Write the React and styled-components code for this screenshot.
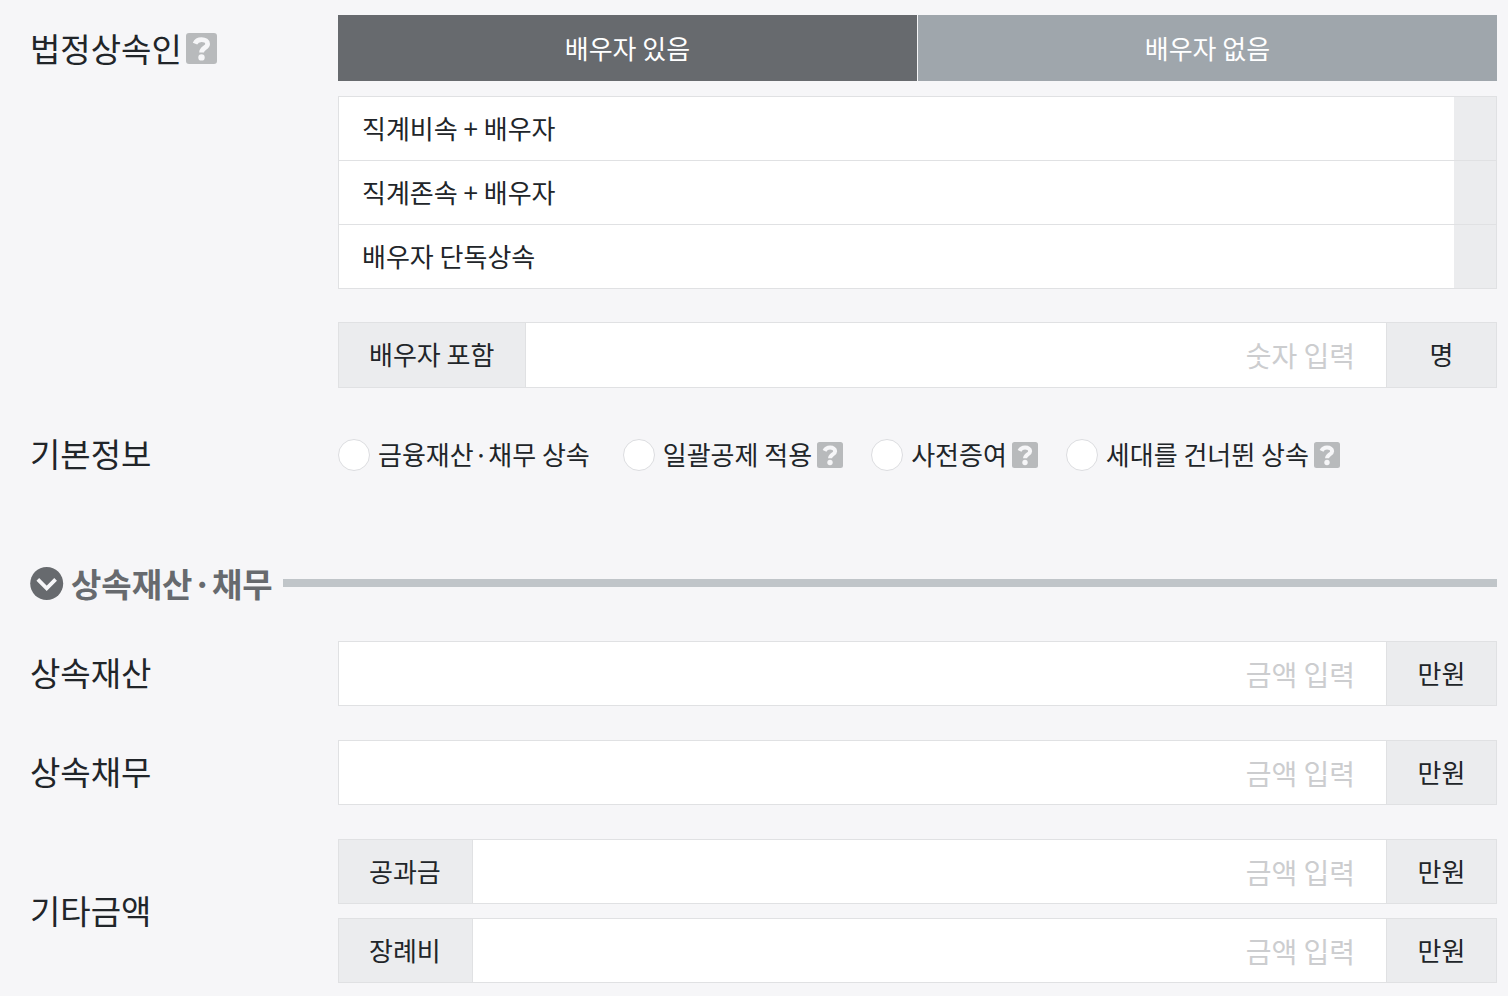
import { useState } from "react";
import styled, { createGlobalStyle } from "styled-components"

const heirs = ['직계비속 + 배우자', '직계존속 + 배우자', '배우자 단독상속'];

const infos = [
    { id: 'finance', text: '금융재산·채무 상속' },
    { id: 'lump', text: '일괄공제 적용', help: true },
    { id: 'gift', text: '사전증여', help: true },
    { id: 'skip', text: '세대를 건너뛴 상속', help: true },
];

function HelpIcon({ size }){
    return(
        <svg width={size} height={size} viewBox="0 0 31 31" aria-hidden="true">
            <rect width="31" height="31" rx="3" fill="#b8babc" />
            <path d="M9 10.6C10.2 7.8 12.6 6.6 15.6 6.6c3.5 0 6 1.7 6 4.3 0 4-6 3.9-6 8.6" fill="none" stroke="#f6f6f8" strokeWidth="4.8" strokeLinejoin="round" />
            <circle cx="15.5" cy="24.4" r="3.2" fill="#f6f6f8" />
        </svg>
    );
}

function AmountField({ id, label, prefix, unit = '만원', placeholder = '금액 입력', tall }){
    return(
        <Group $tall={tall}>
            {prefix && <Prefix htmlFor={id}>{prefix}</Prefix>}
            <AmountInput id={id} aria-label={label} placeholder={placeholder} inputMode="numeric" />
            <Unit>{unit}</Unit>
        </Group>
    );
}

export default function App(){
    const [spouse, setSpouse] = useState(true);
    const [open, setOpen] = useState(true);

    return(
        <>
        <GlobalStyle />
        <Page>
            <Row>
                <Title $top>
                    법정상속인
                    <HelpButton type="button" aria-label="법정상속인 도움말"><HelpIcon size={31} /></HelpButton>
                </Title>
                <Fields>
                    <Tabs>
                        <Tab type="button" $active={spouse} onClick={() => setSpouse(true)}>배우자 있음</Tab>
                        <Tab type="button" $active={!spouse} onClick={() => setSpouse(false)}>배우자 없음</Tab>
                    </Tabs>
                    <HeirList>
                        {heirs.map((heir) => (
                            <li key={heir}><HeirButton type="button">{heir}</HeirButton></li>
                        ))}
                    </HeirList>
                    <AmountField id="heirs" prefix="배우자 포함" unit="명" placeholder="숫자 입력" tall />
                </Fields>
            </Row>
            <InfoRow>
                <Title>기본정보</Title>
                <Checks>
                    {infos.map((info) => (
                        <CheckItem key={info.id}>
                            <Check type="checkbox" id={info.id} />
                            <CheckLabel htmlFor={info.id}>{info.text}</CheckLabel>
                            {info.help && (
                                <HelpButton type="button" aria-label={info.text + ' 도움말'}><HelpIcon size={26} /></HelpButton>
                            )}
                        </CheckItem>
                    ))}
                </Checks>
            </InfoRow>
            <Section>
                <SectionTitle>
                    <SectionButton type="button" aria-expanded={open} onClick={() => setOpen(!open)}>
                        <svg width="34" height="34" viewBox="0 0 34 34" aria-hidden="true">
                            <circle cx="16.7" cy="17.5" r="16.5" fill="#676a6e" />
                            <path d="M7.8 13.4l8.9 8.9 8.9-8.9" fill="none" stroke="#f6f6f8" strokeWidth="3.8" />
                        </svg>
                        상속재산·채무
                    </SectionButton>
                </SectionTitle>
                <Line />
            </Section>
            {open && (
                <Amounts>
                    <Row $center>
                        <Title as="label" htmlFor="assets">상속재산</Title>
                        <Fields><AmountField id="assets" /></Fields>
                    </Row>
                    <Row $center>
                        <Title as="label" htmlFor="debts">상속채무</Title>
                        <Fields><AmountField id="debts" /></Fields>
                    </Row>
                    <Row $center>
                        <Title>기타금액</Title>
                        <Fields $gap={14}>
                            <AmountField id="dues" prefix="공과금" />
                            <AmountField id="funeral" prefix="장례비" />
                        </Fields>
                    </Row>
                </Amounts>
            )}
        </Page>
        </>
    );
}

const GlobalStyle = createGlobalStyle`
    * {
        box-sizing: border-box;
    }
    body {
        margin: 0;
        background-color: #f6f6f8;
        color: #212529;
        font-family: 'Noto Sans CJK KR', sans-serif;
        font-size: 26px;
        line-height: 36px;
    }
    button, input {
        font: inherit;
        color: inherit;
    }
    button {
        cursor: pointer;
    }
`
const Page = styled.main`
    padding: 15px 11px 13px 30px;
`
const Row = styled.div`
    display: flex;
    align-items: ${({ $center }) => $center ? 'center' : 'flex-start'};
`
const InfoRow = styled(Row)`
    align-items: center;
    margin-top: 43px;
`
const Title = styled.div`
    display: flex;
    align-items: center;
    flex: none;
    gap: 4px;
    width: 308px;
    font-size: 33px;
    line-height: 44px;
    padding-top: ${({ $top }) => $top ? '11px' : '0'};
    padding-bottom: 3px;
`
const HelpButton = styled.button`
    display: flex;
    flex: none;
    padding: 0;
    border: none;
    background: none;
`
const Fields = styled.div`
    display: flex;
    flex-direction: column;
    flex: 1;
    min-width: 0;
    gap: ${({ $gap }) => $gap || 0}px;
`
const Tabs = styled.div`
    display: flex;
    gap: 1px;
    margin-bottom: 15px;
`
const Tab = styled.button`
    flex: 1;
    height: 66px;
    padding: 0;
    border: none;
    color: #FFFFFF;
    background-color: ${({ $active }) => $active ? '#676a6e' : '#9fa6ac'};
`
const HeirList = styled.ul`
    margin: 0 0 33px;
    padding: 0;
    list-style: none;
    border: 1px solid #e0e1e3;

    li + li {
        border-top: 1px solid #e0e1e3;
    }
`
const HeirButton = styled.button`
    display: block;
    width: 100%;
    height: 63px;
    padding: 0 23px 2px;
    border: none;
    border-right: 42px solid #ebecee;
    background-color: #FFFFFF;
    text-align: left;
`
const Group = styled.div`
    display: flex;
    height: ${({ $tall }) => $tall ? 66 : 65}px;
    border: 1px solid #e0e1e3;
    background-color: #FFFFFF;
`
const Prefix = styled.label`
    display: flex;
    align-items: center;
    flex: none;
    padding: 0 31px 2px 30px;
    border-right: 1px solid #e0e1e3;
    background-color: #ebecee;
`
const AmountInput = styled.input`
    flex: 1;
    min-width: 0;
    padding: 0 31px;
    border: none;
    background: none;
    text-align: right;
    font-size: 28px;

    &::placeholder {
        color: #cccdcf;
        opacity: 1;
    }
`
const Unit = styled.span`
    display: flex;
    align-items: center;
    justify-content: center;
    flex: none;
    width: 110px;
    padding-bottom: 2px;
    border-left: 1px solid #e0e1e3;
    background-color: #ebecee;
`
const Checks = styled.div`
    display: flex;
    flex-wrap: wrap;
    gap: 28px;
`
const CheckItem = styled.div`
    display: flex;
    align-items: center;
`
const Check = styled.input`
    appearance: none;
    flex: none;
    width: 32px;
    height: 32px;
    margin: 0 8px 0 0;
    border: 1px solid #dcdde0;
    border-radius: 50%;
    background-color: #FFFFFF;

    &:checked {
        border: 10px solid #676a6e;
    }
`
const CheckLabel = styled.label`
    margin-right: 5px;
    padding-bottom: 2px;
`
const Section = styled.div`
    display: flex;
    align-items: center;
    gap: 10px;
    margin: 82px 0 35px;
`
const SectionTitle = styled.h2`
    margin: 0;
    font-size: 33px;
    line-height: 46px;
`
const SectionButton = styled.button`
    display: flex;
    align-items: center;
    gap: 7px;
    padding: 0;
    border: none;
    background: none;
    color: #676a6e;
`
const Line = styled.div`
    flex: 1;
    height: 8px;
    background-color: #c0c5c9;
`
const Amounts = styled.div`
    display: flex;
    flex-direction: column;
    gap: 34px;
`
